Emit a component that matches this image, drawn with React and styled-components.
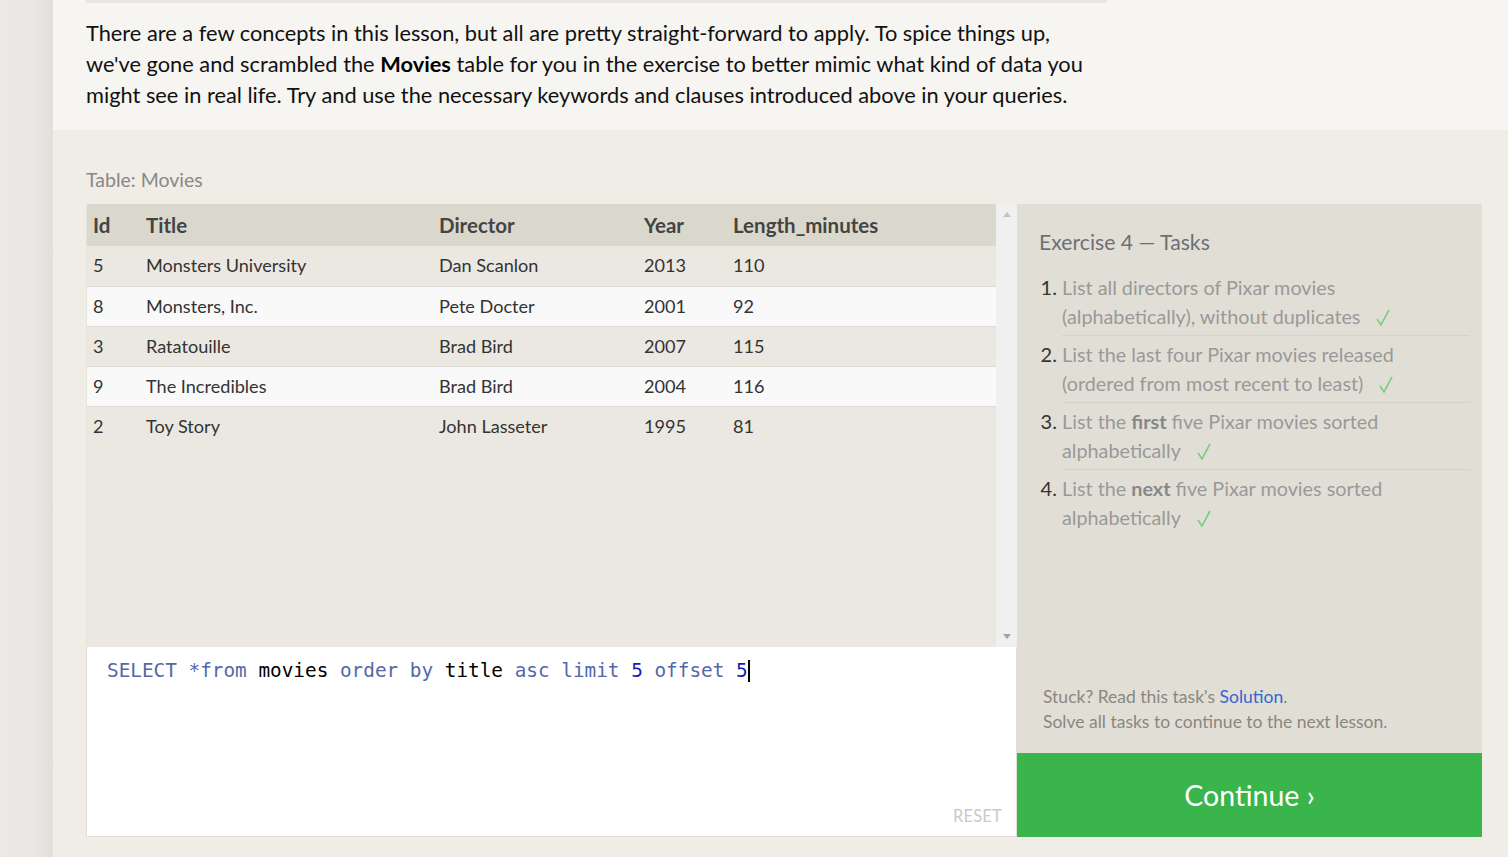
import React from "react";
import styled, { createGlobalStyle } from "styled-components";

const Global = createGlobalStyle`
  html, body { margin: 0; padding: 0; }
  body {
    background: #efede6;
    font-family: "Lato", "Open Sans", sans-serif;
    color: #222;
    overflow: hidden;
  }
`;

const Page = styled.div`
  display: flex;
  width: 1508px;
  height: 857px;
`;

const SideStrip = styled.div`
  width: 53px;
  flex: none;
  background: linear-gradient(to right, #ece8e5 0%, #ebe7e4 60%, #e2dedb 100%);
`;

const Main = styled.div`
  flex: 1;
  display: flex;
  flex-direction: column;
  background: #efede6;
`;

const Lesson = styled.section`
  background: #f6f5f1;
  height: 130px;
  padding: 0 33px;
  box-sizing: border-box;
`;

const TopRule = styled.div`
  width: 1021px;
  height: 3px;
  background: #e8e6de;
`;

const LessonText = styled.p`
  margin: 14px 0 0;
  width: 1040px;
  font-size: 21.8px;
  line-height: 31px;
  color: #111;
  white-space: nowrap;
  strong { font-weight: 700; color: #000; }
`;

const Exercise = styled.section`
  padding: 36px 0 0 33px;
`;

const TableLabel = styled.div`
  font-size: 19.5px;
  line-height: 28px;
  color: #888;
  margin-bottom: 10px;
`;

const Workspace = styled.div`
  display: grid;
  grid-template-columns: 931px 465px;
`;

const LeftCol = styled.div`
  display: flex;
  flex-direction: column;
`;

const TableWrap = styled.div`
  height: 443px;
  display: flex;
  background: #eae8e1;
  border-left: 1px solid #e6e3da;
`;

const TableArea = styled.div`
  flex: 1;
`;

const Table = styled.table`
  width: 100%;
  border-collapse: collapse;
  font-size: 18.1px;
`;

const Th = styled.th`
  text-align: left;
  font-weight: 700;
  font-size: 20.5px;
  color: #444;
  background: #dad8cc;
  height: 42px;
  padding: 0 0 0 ${(p) => p.$pl || 0}px;
  width: ${(p) => p.$w}px;
  box-sizing: border-box;
`;

const Tr = styled.tr`
  background: ${(p) => (p.$alt ? "#f9f9f9" : "#eae8e1")};
  border-bottom: 1px solid #dedcd4;
  &:last-child { border-bottom: none; }
`;

const Td = styled.td`
  height: 40px;
  padding: 0 0 1px ${(p) => p.$pl || 0}px;
  color: #333;
  box-sizing: border-box;
`;

const Scrollbar = styled.div`
  width: 21px;
  flex: none;
  background: #f0f0f0;
  display: flex;
  flex-direction: column;
  justify-content: space-between;
  align-items: center;
  padding: 8px 0;
  box-sizing: border-box;
`;

const Arrow = styled.div`
  width: 0;
  height: 0;
  border-left: 4px solid transparent;
  border-right: 4px solid transparent;
  ${(p) =>
    p.$down
      ? "border-top: 5px solid #a3a3a3;"
      : "border-bottom: 5px solid #c2c2c2;"}
`;

const Editor = styled.div`
  height: 190px;
  background: #fff;
  border: 1px solid #e3e0d7;
  border-top: none;
  box-sizing: border-box;
  display: flex;
  flex-direction: column;
  justify-content: space-between;
  padding: 12px 14px 10px 20px;
`;

const Code = styled.div`
  font-family: "DejaVu Sans Mono", "Liberation Mono", monospace;
  font-size: 19.35px;
  line-height: 24px;
  color: #000;
  white-space: pre;
`;

const Kw = styled.span`
  color: ${(p) => (p.$num ? "#1a1ab8" : "#5368a8")};
`;

const Caret = styled.span`
  display: inline-block;
  width: 2px;
  height: 22px;
  background: #000;
  vertical-align: -5px;
`;

const Reset = styled.div`
  align-self: flex-end;
  font-size: 16.5px;
  color: #c9c9c9;
  letter-spacing: 0.2px;
`;

const RightCol = styled.div`
  display: flex;
  flex-direction: column;
`;

const TasksPanel = styled.div`
  height: 549px;
  background: #e1dfd5;
  box-sizing: border-box;
  padding: 24px 12px 19px 22px;
  display: flex;
  flex-direction: column;
`;

const TasksTitle = styled.h3`
  margin: 0;
  font-weight: 400;
  font-size: 21.2px;
  line-height: 28px;
  color: #6e6f76;
`;

const TaskList = styled.ol`
  margin: 13px 0 0;
  padding: 0 0 0 23px;
  flex: 1;
`;

const Task = styled.li`
  font-size: 19.8px;
  line-height: 29px;
  color: #999;
  padding: 4px 0 4px;
  border-bottom: 1px solid #d5d3c9;
  white-space: nowrap;
  &:last-child { border-bottom: none; }
  &::marker { color: #333; font-size: 20px; }
  strong { color: #888; font-weight: 700; }
`;

const Check = styled.svg`
  margin-left: 16px;
  vertical-align: -3px;
`;

const Help = styled.div`
  padding-left: 4px;
  font-size: 17.5px;
  line-height: 25px;
  color: #8a8780;
  a { color: #3466d0; text-decoration: none; }
`;

const ContinueButton = styled.button`
  height: 84px;
  border: none;
  background: #3ab54b;
  color: #fff;
  font-family: inherit;
  font-size: 28.5px;
  cursor: pointer;
`;

const CheckMark = () => (
  <Check width="14" height="18" viewBox="0 0 14 18">
    <polyline points="1,10 5,16 13,1" fill="none" stroke="#7ccb85" strokeWidth="1.6" />
  </Check>
);

const movies = [
  [5, "Monsters University", "Dan Scanlon", 2013, 110],
  [8, "Monsters, Inc.", "Pete Docter", 2001, 92],
  [3, "Ratatouille", "Brad Bird", 2007, 115],
  [9, "The Incredibles", "Brad Bird", 2004, 116],
  [2, "Toy Story", "John Lasseter", 1995, 81],
];

export default function App() {
  return (
    <>
      <Global />
      <Page>
        <SideStrip />
        <Main>
          <Lesson>
            <TopRule />
            <LessonText>
              There are a few concepts in this lesson, but all are pretty straight-forward to apply. To spice things up,
              <br />
              we've gone and scrambled the <strong>Movies</strong> table for you in the exercise to better mimic what kind of data you
              <br />
              might see in real life. Try and use the necessary keywords and clauses introduced above in your queries.
            </LessonText>
          </Lesson>
          <Exercise>
            <TableLabel>Table: Movies</TableLabel>
            <Workspace>
              <LeftCol>
                <TableWrap>
                  <TableArea>
                    <Table>
                      <thead>
                        <tr>
                          <Th $w={59} $pl={6}>Id</Th>
                          <Th $w={293}>Title</Th>
                          <Th $w={205}>Director</Th>
                          <Th $w={89}>Year</Th>
                          <Th>Length_minutes</Th>
                        </tr>
                      </thead>
                      <tbody>
                        {movies.map((m, i) => (
                          <Tr key={m[0]} $alt={i % 2 === 1}>
                            <Td $pl={6}>{m[0]}</Td>
                            <Td>{m[1]}</Td>
                            <Td>{m[2]}</Td>
                            <Td>{m[3]}</Td>
                            <Td>{m[4]}</Td>
                          </Tr>
                        ))}
                      </tbody>
                    </Table>
                  </TableArea>
                  <Scrollbar>
                    <Arrow />
                    <Arrow $down />
                  </Scrollbar>
                </TableWrap>
                <Editor>
                  <Code>
                    <Kw>SELECT *from</Kw> movies <Kw>order by</Kw> title <Kw>asc</Kw> <Kw>limit</Kw> <Kw $num>5</Kw> <Kw>offset</Kw> <Kw $num>5</Kw>
                    <Caret />
                  </Code>
                  <Reset>RESET</Reset>
                </Editor>
              </LeftCol>
              <RightCol>
                <TasksPanel>
                  <TasksTitle>Exercise 4 — Tasks</TasksTitle>
                  <TaskList>
                    <Task>
                      List all directors of Pixar movies
                      <br />
                      (alphabetically), without duplicates
                      <CheckMark />
                    </Task>
                    <Task>
                      List the last four Pixar movies released
                      <br />
                      (ordered from most recent to least)
                      <CheckMark />
                    </Task>
                    <Task>
                      List the <strong>first</strong> five Pixar movies sorted
                      <br />
                      alphabetically
                      <CheckMark />
                    </Task>
                    <Task>
                      List the <strong>next</strong> five Pixar movies sorted
                      <br />
                      alphabetically
                      <CheckMark />
                    </Task>
                  </TaskList>
                  <Help>
                    Stuck? Read this task's <a href="#">Solution</a>.
                    <br />
                    Solve all tasks to continue to the next lesson.
                  </Help>
                </TasksPanel>
                <ContinueButton>Continue ›</ContinueButton>
              </RightCol>
            </Workspace>
          </Exercise>
        </Main>
      </Page>
    </>
  );
}
